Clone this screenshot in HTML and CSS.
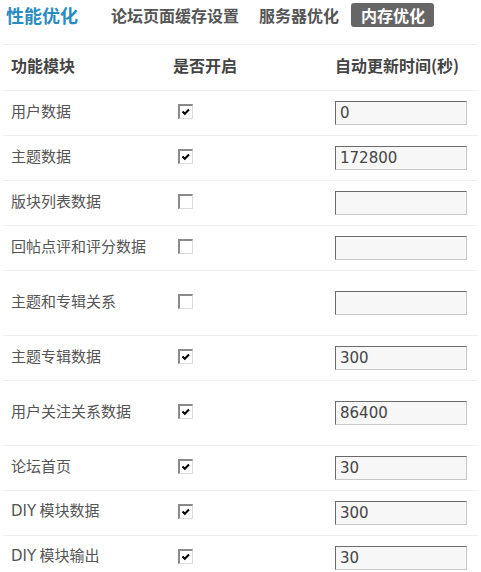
FILE: index.html
```html
<!DOCTYPE html>
<html lang="zh-CN">
<head>
<meta charset="utf-8">
<title>内存优化</title>
<link rel="stylesheet" href="styles.css">
</head>
<body>
<div class="tabbar">
  <span class="title">性能优化</span>
  <span class="tab">论坛页面缓存设置</span>
  <span class="tab">服务器优化</span>
  <span class="tab active">内存优化</span>
</div>
<div class="table">
  <div class="row head">
    <div class="c1">功能模块</div>
    <div class="c2">是否开启</div>
    <div class="c3">自动更新时间(秒)</div>
  </div>
  <div class="row">
    <div class="c1">用户数据</div>
    <div class="c2"><span class="cb"><svg viewBox="0 0 12 12" width="12" height="12"><path d="M2.5 5.5 L4.8 7.8 L9 3.5" /></svg></span></div>
    <div class="c3"><span class="inp">0</span></div>
  </div>
  <div class="row">
    <div class="c1">主题数据</div>
    <div class="c2"><span class="cb"><svg viewBox="0 0 12 12" width="12" height="12"><path d="M2.5 5.5 L4.8 7.8 L9 3.5" /></svg></span></div>
    <div class="c3"><span class="inp">172800</span></div>
  </div>
  <div class="row">
    <div class="c1">版块列表数据</div>
    <div class="c2"><span class="cb"></span></div>
    <div class="c3"><span class="inp"></span></div>
  </div>
  <div class="row">
    <div class="c1">回帖点评和评分数据</div>
    <div class="c2"><span class="cb"></span></div>
    <div class="c3"><span class="inp"></span></div>
  </div>
  <div class="row tall">
    <div class="c1">主题和专辑关系</div>
    <div class="c2"><span class="cb"></span></div>
    <div class="c3"><span class="inp"></span></div>
  </div>
  <div class="row">
    <div class="c1">主题专辑数据</div>
    <div class="c2"><span class="cb"><svg viewBox="0 0 12 12" width="12" height="12"><path d="M2.5 5.5 L4.8 7.8 L9 3.5" /></svg></span></div>
    <div class="c3"><span class="inp">300</span></div>
  </div>
  <div class="row tall">
    <div class="c1">用户关注关系数据</div>
    <div class="c2"><span class="cb"><svg viewBox="0 0 12 12" width="12" height="12"><path d="M2.5 5.5 L4.8 7.8 L9 3.5" /></svg></span></div>
    <div class="c3"><span class="inp">86400</span></div>
  </div>
  <div class="row">
    <div class="c1">论坛首页</div>
    <div class="c2"><span class="cb"><svg viewBox="0 0 12 12" width="12" height="12"><path d="M2.5 5.5 L4.8 7.8 L9 3.5" /></svg></span></div>
    <div class="c3"><span class="inp">30</span></div>
  </div>
  <div class="row">
    <div class="c1"><span class="lat">DIY</span> 模块数据</div>
    <div class="c2"><span class="cb"><svg viewBox="0 0 12 12" width="12" height="12"><path d="M2.5 5.5 L4.8 7.8 L9 3.5" /></svg></span></div>
    <div class="c3"><span class="inp">300</span></div>
  </div>
  <div class="row">
    <div class="c1"><span class="lat">DIY</span> 模块输出</div>
    <div class="c2"><span class="cb"><svg viewBox="0 0 12 12" width="12" height="12"><path d="M2.5 5.5 L4.8 7.8 L9 3.5" /></svg></span></div>
    <div class="c3"><span class="inp">30</span></div>
  </div>
</div>
</body>
</html>
```
FILE: styles.css
```css
html, body {
  margin: 0;
  padding: 0;
  background: #fff;
}
body {
  font-family: "Noto Sans CJK SC", sans-serif;
  color: #555;
  font-size: 15px;
}
.tabbar {
  display: flex;
  align-items: center;
  height: 30px;
  padding-left: 6px;
}
.title {
  font-size: 18px;
  font-weight: bold;
  color: #2a8cc0;
  margin-right: 23px;
}
.tab {
  font-size: 16px;
  font-weight: bold;
  color: #555;
  padding: 0 10px;
  height: 24px;
  line-height: 24px;
}
.tab.active {
  margin-left: 2px;
  padding: 0 9px 0 10px;
  background: #666;
  color: #fff;
  border-radius: 3px;
}
.table {
  margin: 14px 3px 0;
  border-top: 1px solid #efeff2;
}
.row {
  display: grid;
  grid-template-columns: 170px 162px 1fr;
  align-items: center;
  height: 44px;
  line-height: 20px;
  border-bottom: 1px solid #efeff2;
}
.row.tall {
  height: 64px;
}
.row.head {
  height: 45px;
  font-size: 16px;
  font-weight: bold;
  color: #444;
}
.c1 {
  padding-left: 8px;
  padding-bottom: 5px;
  white-space: nowrap;
}
.head .c2,
.head .c3 {
  padding-bottom: 5px;
}
.lat {
  font-family: "DejaVu Sans", sans-serif;
  font-size: 15px;
}
.cb {
  display: block;
  box-sizing: border-box;
  width: 15px;
  height: 15px;
  margin-left: 5px;
  margin-top: -4px;
  background: #fff;
  border-style: solid;
  border-width: 2px 1px 1px 2px;
  border-color: #8a8a8a #dcdcdc #dcdcdc #8a8a8a;
}
.cb svg {
  display: block;
  fill: none;
  stroke: #000;
  stroke-width: 2;
}
.inp {
  display: block;
  box-sizing: border-box;
  width: 132px;
  height: 24px;
  line-height: 22px;
  padding-left: 4px;
  margin-top: -1px;
  background: #f7f7f7;
  border: 1px solid;
  border-color: #6a6a6a #c8c8c8 #c8c8c8 #6a6a6a;
  color: #444;
  font-family: "DejaVu Sans", sans-serif;
  font-size: 15px;
}
```
